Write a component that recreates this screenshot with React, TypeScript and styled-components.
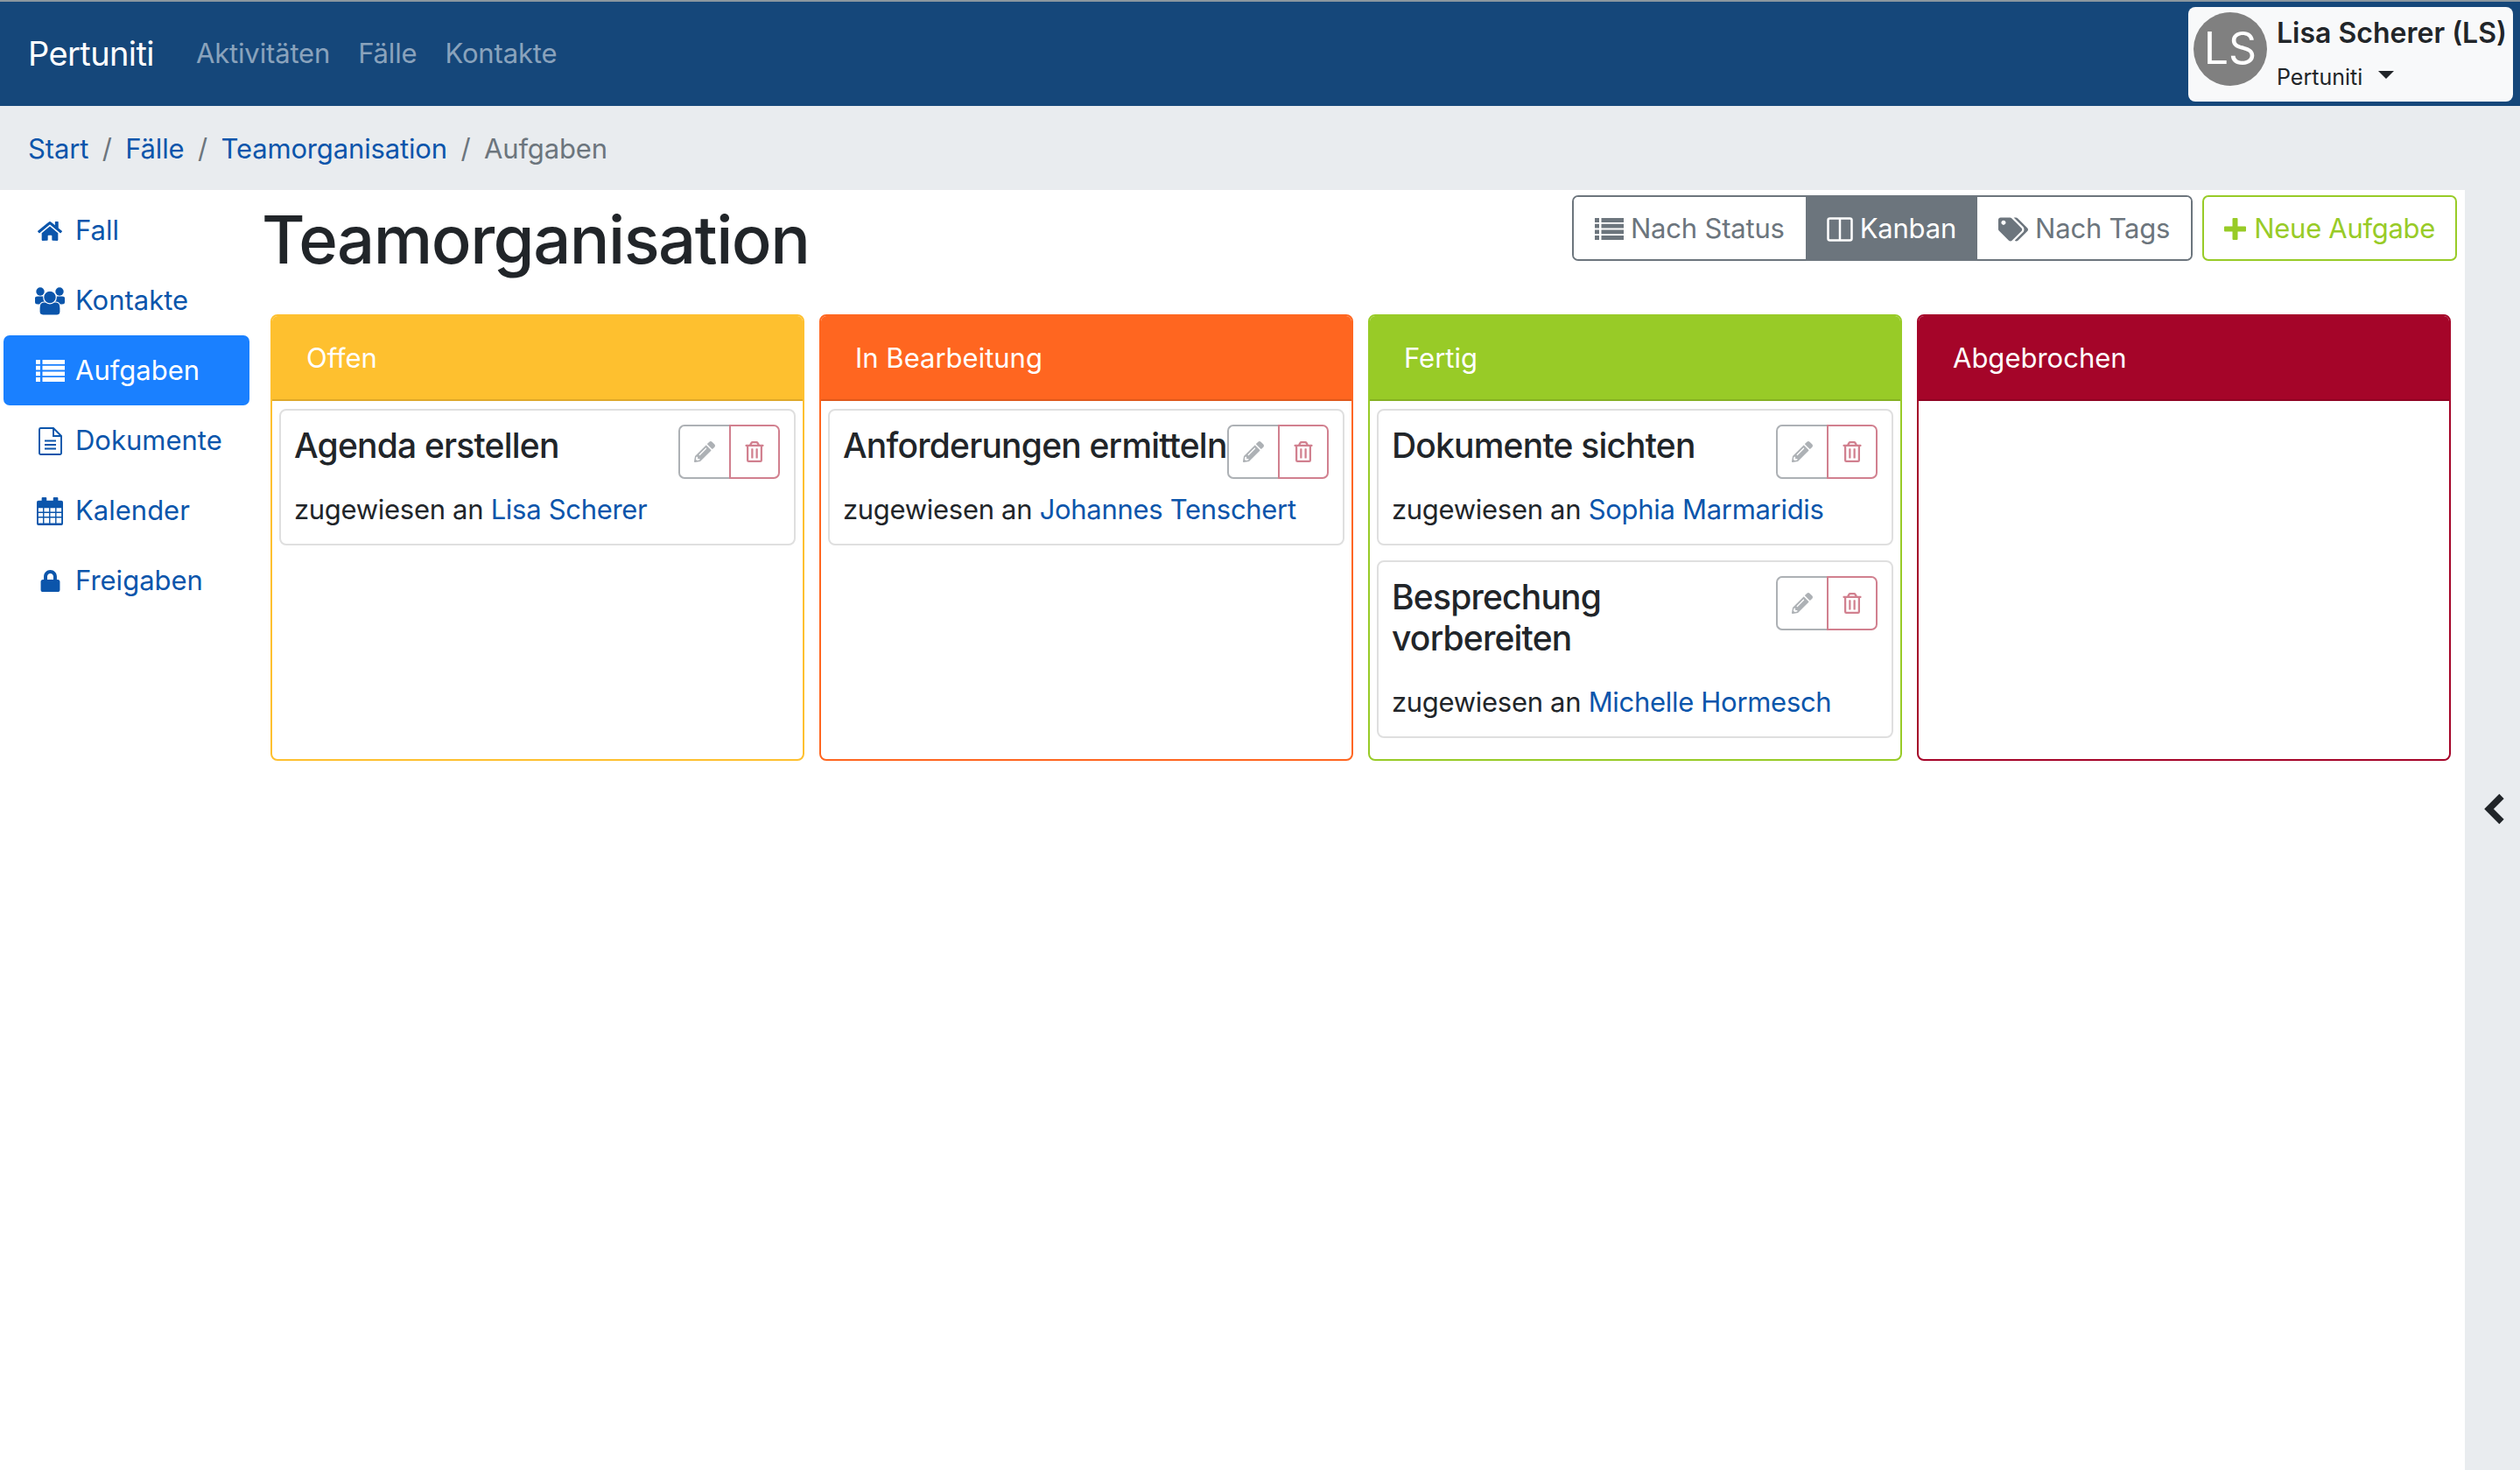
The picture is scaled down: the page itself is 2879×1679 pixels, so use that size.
import React from "react";
import styled, { createGlobalStyle } from "styled-components";
import {
  FaHome,
  FaLock,
  FaPencilAlt,
  FaRegTrashAlt,
  FaTags,
} from "react-icons/fa";

const GlobalStyle = createGlobalStyle`
  html, body {
    margin: 0;
    padding: 0;
    background: #fff;
  }
  body {
    font-family: Inter, "Liberation Sans", sans-serif;
    font-size: 31px;
    line-height: 1.5;
    color: #212529;
  }
  * {
    box-sizing: border-box;
  }
`;

const Page = styled.div`
  width: 2879px;
  height: 1679px;
  display: flex;
  flex-direction: column;
  overflow: hidden;
`;

const Navbar = styled.nav`
  height: 121px;
  flex: none;
  display: flex;
  align-items: center;
  justify-content: space-between;
  padding: 0 8px 0 32px;
  background: #15477a;
  border-top: 2px solid #8b979f;
`;

const NavLeft = styled.div`
  display: flex;
  align-items: center;
`;

const Brand = styled.a`
  font-size: 38px;
  letter-spacing: -0.6px;
  color: #fff;
  margin-right: 48px;
`;

const NavLink = styled.a`
  color: rgba(255, 255, 255, 0.5);
  letter-spacing: -0.15px;
  margin-right: 32px;
`;

const UserBox = styled.div`
  width: 371px;
  height: 108px;
  display: flex;
  align-items: flex-start;
  padding: 6px 6px 0;
  background: #f8f9fa;
  border-radius: 8px;
`;

const Avatar = styled.div`
  width: 84px;
  height: 84px;
  flex: none;
  margin-right: 11px;
  display: flex;
  align-items: center;
  justify-content: center;
  border-radius: 50%;
  background: #808080;
  color: #fff;
  font-size: 50px;
`;

const UserText = styled.div`
  display: flex;
  flex-direction: column;
  gap: 8px;
  padding-top: 1px;
`;

const UserName = styled.div`
  font-weight: 600;
  font-size: 32px;
  line-height: 46px;
  white-space: nowrap;
`;

const UserOrg = styled.div`
  display: flex;
  align-items: center;
  font-size: 25px;
  line-height: 38px;
`;

const Caret = styled.span`
  width: 0;
  height: 0;
  margin-left: 18px;
  margin-top: -4px;
  border-top: 9px solid #212529;
  border-left: 9px solid transparent;
  border-right: 9px solid transparent;
`;

const Breadcrumb = styled.div`
  height: 96px;
  flex: none;
  display: flex;
  align-items: center;
  padding: 2px 0 0 32px;
  background: #e9ecef;
  color: #6c757d;
  letter-spacing: -0.15px;
`;

const Crumb = styled.a`
  color: #0b55ab;
`;

const Separator = styled.span`
  padding: 0 15.5px;
  color: #6c757d;
`;

const Main = styled.div`
  flex: 1;
  display: flex;
`;

const Sidebar = styled.ul`
  width: 289px;
  flex: none;
  list-style: none;
  margin: 0;
  padding: 6px 0 0 4px;
`;

const SideItem = styled.li<{ $active?: boolean }>`
  width: 281px;
  height: 80px;
  display: flex;
  align-items: center;
  padding-top: 1px;
  border-radius: 7px;
  color: ${(p) => (p.$active ? "#fff" : "#0b55ab")};
  background: ${(p) => (p.$active ? "#1a80ff" : "transparent")};
`;

const SideIcon = styled.span`
  width: 82px;
  flex: none;
  display: flex;
  justify-content: center;
  padding-left: 24px;
  svg {
    display: block;
  }
`;

const Content = styled.div`
  flex: 1;
  min-width: 0;
  display: flex;
  flex-direction: column;
  padding: 6px 9px 0 11px;
`;

const TitleRow = styled.div`
  height: 136px;
  display: flex;
  justify-content: space-between;
  align-items: flex-start;
`;

const Title = styled.h1`
  margin: 0 0 0 -1px;
  font-size: 76px;
  font-weight: 500;
  letter-spacing: -1.5px;
  line-height: 100px;
`;

const Actions = styled.div`
  display: flex;
  gap: 11px;
`;

const ButtonGroup = styled.div`
  display: flex;
  height: 75px;
  border: 2px solid #6c757d;
  border-radius: 7px;
  overflow: hidden;
`;

const ViewButton = styled.button<{ $active?: boolean }>`
  display: flex;
  align-items: center;
  gap: 8px;
  padding: 2px 24px 0;
  border: 0;
  font: inherit;
  font-size: 31px;
  letter-spacing: -0.2px;
  color: ${(p) => (p.$active ? "#fff" : "#6c757d")};
  background: ${(p) => (p.$active ? "#6c757d" : "#fff")};
`;

const AddButton = styled.button`
  height: 75px;
  display: flex;
  align-items: center;
  gap: 9px;
  padding: 2px 23px 0;
  border: 2px solid #98cb27;
  border-radius: 7px;
  background: #fff;
  font: inherit;
  font-size: 31px;
  letter-spacing: -0.3px;
  color: #98cb27;
`;

const Board = styled.div`
  display: grid;
  grid-template-columns: repeat(4, 1fr);
  gap: 17px;
  padding: 0 7px 0 9px;
`;

const Column = styled.section<{ $color: string }>`
  height: 510px;
  display: flex;
  flex-direction: column;
  border: 2px solid ${(p) => p.$color};
  border-radius: 8px;
  background: #fff;
  overflow: hidden;
  --col: ${(p) => p.$color};
`;

const ColumnHead = styled.div`
  height: 99px;
  flex: none;
  display: flex;
  align-items: center;
  margin: -2px -2px 0;
  padding: 3px 0 0 41px;
  color: #fff;
  background: var(--col);
  border-bottom: 2px solid rgba(0, 0, 0, 0.125);
`;

const ColumnBody = styled.div`
  display: flex;
  flex-direction: column;
  gap: 17px;
  padding: 9px 8px 8px;
`;

const Card = styled.article`
  border: 2px solid #dfdfdf;
  border-radius: 8px;
  padding: 17px 16px 16px 15px;
`;

const CardTop = styled.div`
  display: flex;
  justify-content: space-between;
  align-items: flex-start;
`;

const CardTitle = styled.h5`
  margin: 0 0 26.5px;
  font-size: 39px;
  font-weight: 500;
  letter-spacing: -0.8px;
  line-height: 46.5px;
`;

const CardActions = styled.div`
  display: flex;
  flex: none;
  height: 62px;
  margin-top: -1px;
`;

const IconButton = styled.button<{ $color: string; $side: "left" | "right" }>`
  width: 58px;
  height: 62px;
  display: flex;
  align-items: center;
  justify-content: center;
  padding: 0;
  background: #fff;
  font-size: 24px;
  color: ${(p) => p.$color};
  border: 2px solid ${(p) => p.$color};
  border-radius: ${(p) => (p.$side === "left" ? "7px 0 0 7px" : "0 7px 7px 0")};
  ${(p) => (p.$side === "left" ? "border-right: 0;" : "")}
`;

const Assignee = styled.p`
  margin: 0;
  letter-spacing: -0.3px;
  line-height: 46px;
`;

const PersonLink = styled.a`
  color: #0b55ab;
`;

const Rail = styled.aside`
  width: 63px;
  flex: none;
  display: flex;
  justify-content: center;
  align-items: flex-start;
  padding: 688px 0 0 4px;
  background: #e9ecef;
`;

function ListIcon() {
  return (
    <svg width="33" height="25" viewBox="0 0 33 25" fill="currentColor">
      {[0, 6.7, 13.4, 20.1].map((y) => (
        <path key={y} d={`M0 ${y}h5v4.900H0zM7.500 ${y}H33v4.900H7.500z`} />
      ))}
    </svg>
  );
}

function UsersIcon() {
  return (
    <svg width="34" height="32" viewBox="0 0 34 32" fill="currentColor">
      <circle cx="6" cy="5" r="4.700" />
      <circle cx="28" cy="5" r="4.700" />
      <path d="M0 12.500q0-2 3-2h6.500q2 2 3 3v6H3q-3 0-3-2.500zM34 12.500q0-2-3-2h-6.500q-2 2-3 3v6H31q3 0 3-2.500z" />
      <path
        d="M5 24q0-7 5-7h14q5 0 5 7v4q0 4-4 4H9q-4 0-4-4z"
        stroke="#fff"
        strokeWidth="1.200"
      />
      <circle cx="17" cy="11.500" r="7.300" stroke="#fff" strokeWidth="1.200" />
    </svg>
  );
}

function FileIcon() {
  return (
    <svg width="27" height="32" viewBox="0 0 27 32" fill="none" stroke="currentColor" strokeWidth="1.900">
      <path d="M2.500 1h14.500l9 9v19.500a1.500 1.500 0 0 1-1.500 1.500h-22a1.500 1.500 0 0 1-1.500-1.500v-27a1.500 1.500 0 0 1 1.500-1.500z" />
      <path d="M17 1v9h9M7 15.500h13M7 20h13M7 24.500h13" />
    </svg>
  );
}

function CalendarIcon() {
  return (
    <svg width="30" height="32" viewBox="0 0 32 34" fill="currentColor">
      <path d="M7 0h4a1 1 0 0 1 1 1v3h8V1a1 1 0 0 1 1-1h4a1 1 0 0 1 1 1v3h4a2 2 0 0 1 2 2v26a2 2 0 0 1-2 2H2a2 2 0 0 1-2-2V6a2 2 0 0 1 2-2h4V1a1 1 0 0 1 1-1z" />
      <path
        fill="#fff"
        d="M2 13h5.500v4.500H2zM9 13h6v4.500H9zM16.500 13h6v4.500h-6zM24 13h6v4.500h-6zM2 19h5.500v4.500H2zM9 19h6v4.500H9zM16.500 19h6v4.500h-6zM24 19h6v4.500h-6zM2 25h5.500v6.500H2zM9 25h6v6.500H9zM16.500 25h6v6.500h-6zM24 25h6v6.500h-6z"
      />
    </svg>
  );
}

function ColumnsIcon() {
  return (
    <svg width="30" height="28" viewBox="0 0 30 28" fill="none" stroke="currentColor" strokeWidth="2.500">
      <rect x="1.500" y="1.500" width="27" height="25" rx="2" />
      <path d="M15 1.500v25" />
    </svg>
  );
}

function PlusIcon() {
  return (
    <svg width="25" height="25" viewBox="0 0 25 25" fill="currentColor">
      <path d="M9.500 1a1 1 0 0 1 1-1h4a1 1 0 0 1 1 1v8.500H24a1 1 0 0 1 1 1v4a1 1 0 0 1-1 1h-8.500V24a1 1 0 0 1-1 1h-4a1 1 0 0 1-1-1v-8.500H1a1 1 0 0 1-1-1v-4a1 1 0 0 1 1-1h8.500z" />
    </svg>
  );
}

function ChevronIcon() {
  return (
    <svg width="24" height="38" viewBox="0 0 24 38" fill="none" stroke="#212529" strokeWidth="7.500">
      <path d="M20 4.500 5.500 19 20 33.500" />
    </svg>
  );
}

const columns = [
  {
    title: "Offen",
    color: "#fec02f",
    cards: [{ title: "Agenda erstellen", person: "Lisa Scherer" }],
  },
  {
    title: "In Bearbeitung",
    color: "#ff6620",
    cards: [{ title: "Anforderungen ermitteln", person: "Johannes Tenschert" }],
  },
  {
    title: "Fertig",
    color: "#98cb27",
    cards: [
      { title: "Dokumente sichten", person: "Sophia Marmaridis" },
      { title: "Besprechung vorbereiten", person: "Michelle Hormesch" },
    ],
  },
  { title: "Abgebrochen", color: "#a50529", cards: [] },
];

const sideItems = [
  { label: "Fall", icon: <FaHome size={28} /> },
  { label: "Kontakte", icon: <UsersIcon /> },
  { label: "Aufgaben", icon: <ListIcon />, active: true },
  { label: "Dokumente", icon: <FileIcon /> },
  { label: "Kalender", icon: <CalendarIcon /> },
  { label: "Freigaben", icon: <FaLock size={25} /> },
];

export default function App() {
  return (
    <Page>
      <GlobalStyle />
      <Navbar>
        <NavLeft>
          <Brand>Pertuniti</Brand>
          <NavLink>Aktivitäten</NavLink>
          <NavLink>Fälle</NavLink>
          <NavLink>Kontakte</NavLink>
        </NavLeft>
        <UserBox>
          <Avatar>LS</Avatar>
          <UserText>
            <UserName>Lisa Scherer (LS)</UserName>
            <UserOrg>
              Pertuniti
              <Caret />
            </UserOrg>
          </UserText>
        </UserBox>
      </Navbar>

      <Breadcrumb>
        <Crumb>Start</Crumb>
        <Separator>/</Separator>
        <Crumb>Fälle</Crumb>
        <Separator>/</Separator>
        <Crumb>Teamorganisation</Crumb>
        <Separator>/</Separator>
        Aufgaben
      </Breadcrumb>

      <Main>
        <Sidebar>
          {sideItems.map((item) => (
            <SideItem key={item.label} $active={item.active}>
              <SideIcon>{item.icon}</SideIcon>
              {item.label}
            </SideItem>
          ))}
        </Sidebar>

        <Content>
          <TitleRow>
            <Title>Teamorganisation</Title>
            <Actions>
              <ButtonGroup>
                <ViewButton>
                  <ListIcon />
                  Nach Status
                </ViewButton>
                <ViewButton $active>
                  <ColumnsIcon />
                  Kanban
                </ViewButton>
                <ViewButton>
                  <FaTags size={34} />
                  Nach Tags
                </ViewButton>
              </ButtonGroup>
              <AddButton>
                <PlusIcon />
                Neue Aufgabe
              </AddButton>
            </Actions>
          </TitleRow>

          <Board>
            {columns.map((col) => (
              <Column key={col.title} $color={col.color}>
                <ColumnHead>{col.title}</ColumnHead>
                <ColumnBody>
                  {col.cards.map((card) => (
                    <Card key={card.title}>
                      <CardTop>
                        <CardTitle>{card.title}</CardTitle>
                        <CardActions>
                          <IconButton $color="#adb1b5" $side="left">
                            <FaPencilAlt />
                          </IconButton>
                          <IconButton $color="#d1808f" $side="right">
                            <FaRegTrashAlt />
                          </IconButton>
                        </CardActions>
                      </CardTop>
                      <Assignee>
                        zugewiesen an <PersonLink>{card.person}</PersonLink>
                      </Assignee>
                    </Card>
                  ))}
                </ColumnBody>
              </Column>
            ))}
          </Board>
        </Content>

        <Rail>
          <ChevronIcon />
        </Rail>
      </Main>
    </Page>
  );
}
